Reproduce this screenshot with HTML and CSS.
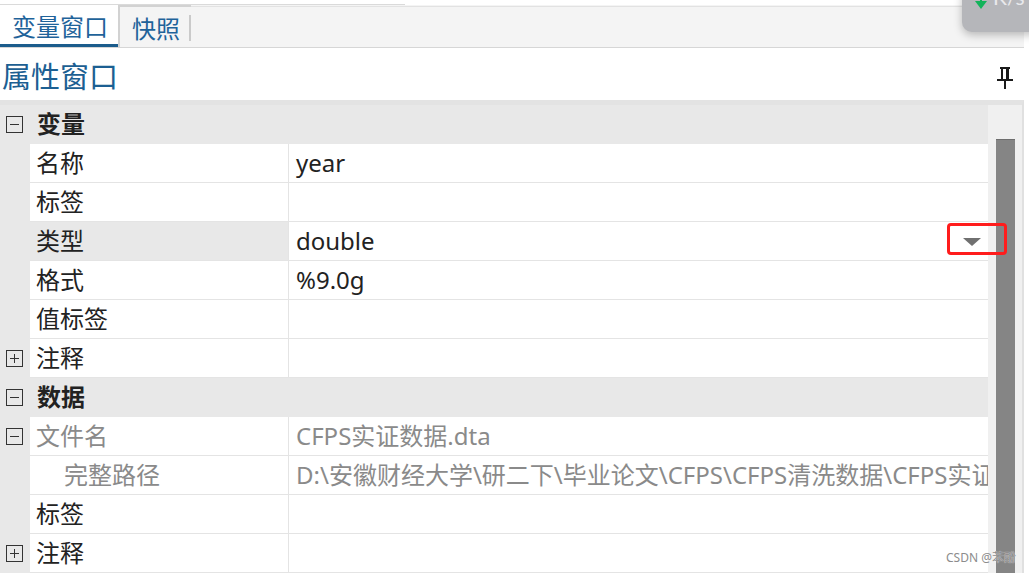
FILE: index.html
```html
<!DOCTYPE html>
<html lang="zh-CN">
<head>
  <meta charset="UTF-8" />
  <title>属性窗口</title>
  <link rel="stylesheet" href="styles.css">
</head>
<body>
  <div class="panel">
    <div class="edge"></div>
    <div class="tabs">
      <div class="tab active">变量窗口</div>
      <div class="tab">快照</div>
      <div class="tab-rest"></div>
    </div>

    <div class="title-bar">
      <h1>属性窗口</h1>
      <svg class="pin" width="16" height="22" viewBox="0 0 16 22">
        <rect x="3" y="0" width="10" height="2" />
        <rect x="4" y="0" width="2" height="13" />
        <rect x="9" y="0" width="3" height="13" />
        <rect x="0" y="12" width="16" height="2" />
        <rect x="7" y="14" width="2" height="8" />
      </svg>
    </div>

    <div class="grid">
      <div class="rows">
        <div class="row cat"><span class="gut"><i class="box"></i></span><span class="name">变量</span></div>
        <div class="row"><span class="gut"></span><span class="name">名称</span><span class="val">year</span></div>
        <div class="row"><span class="gut"></span><span class="name">标签</span><span class="val"></span></div>
        <div class="row sel"><span class="gut"></span><span class="name">类型</span><span class="val">double<i class="drop"></i></span></div>
        <div class="row"><span class="gut"></span><span class="name">格式</span><span class="val">%9.0g</span></div>
        <div class="row"><span class="gut"></span><span class="name">值标签</span><span class="val"></span></div>
        <div class="row"><span class="gut"><i class="box plus"></i></span><span class="name">注释</span><span class="val"></span></div>
        <div class="row cat"><span class="gut"><i class="box"></i></span><span class="name">数据</span></div>
        <div class="row dim"><span class="gut"><i class="box"></i></span><span class="name">文件名</span><span class="val">CFPS实证数据.dta</span></div>
        <div class="row dim"><span class="gut"></span><span class="name sub">完整路径</span><span class="val">D:\安徽财经大学\研二下\毕业论文\CFPS\CFPS清洗数据\CFPS实证数据.dta</span></div>
        <div class="row"><span class="gut"></span><span class="name">标签</span><span class="val"></span></div>
        <div class="row"><span class="gut"><i class="box plus"></i></span><span class="name">注释</span><span class="val"></span></div>
      </div>
      <div class="scroll"><div class="thumb"></div></div>
    </div>
  </div>

  <!-- overlays on top of the screenshot -->
  <div class="speed"><i class="down"></i><span>K/s</span></div>
  <div class="callout"></div>
  <div class="mark">CSDN @苯酚</div>
</body>
</html>
```

FILE: styles.css
```css
body {
  margin: 0;
  background: #fff;
  font-family: "Noto Sans", "Noto Sans CJK SC", sans-serif;
  color: #222;
  overflow: hidden;
}

.panel {
  width: 1024px;
}

.edge {
  width: 405px;
  height: 4px;
  border-bottom: 1px solid #dadada;
}

/* tabs */
.tabs {
  display: flex;
  height: 43px;
  box-sizing: border-box;
  background: #f4f4f4;
  border-bottom: 1px solid #d6d6d6;
}
.tab {
  display: flex;
  align-items: center;
  font-size: 24px;
  color: #1f639a;
  box-sizing: border-box;
  position: relative;
}
.tab.active {
  width: 118px;
  padding-left: 12px;
  background: #fff;
  border-bottom: 3px solid #1b5c8c;
  padding-top: 2px;
}
.tab:not(.active) {
  width: 73px;
  padding-left: 12px;
  border-top: 2px solid #d2d2d2;
  border-left: 2px solid #d2d2d2;
}
.tab:not(.active)::after {
  content: "";
  position: absolute;
  right: 0;
  top: 8px;
  bottom: 6px;
  width: 2px;
  background: #cacaca;
}
.tab-rest {
  flex: 1;
  margin-top: 1px;
  border-top: 1px solid #e2e2e2;
}

/* title */
.title-bar {
  height: 52px;
  display: flex;
  align-items: center;
  justify-content: space-between;
  padding: 5px 11px 0 2px;
  box-sizing: border-box;
}
.title-bar h1 {
  margin: 0;
  font-size: 29px;
  font-weight: normal;
  color: #1c5f92;
  line-height: 40px;
}
.pin {
  fill: #1a1a1a;
  margin-top: 3px;
}

/* property grid */
.grid {
  display: flex;
  border-top: 5px solid #e3e3e3;
  border-right: 2px solid #e0e0e0;
  height: 473px;
}
.rows {
  width: 988px;
}
.row {
  display: flex;
  height: 39px;
  font-size: 24px;
  line-height: 38px;
}
.gut {
  width: 30px;
  flex: none;
  background: #e8e8e8;
  display: flex;
  align-items: center;
  padding-left: 6px;
  box-sizing: border-box;
}
.name {
  width: 259px;
  flex: none;
  box-sizing: border-box;
  padding-left: 6px;
  border-bottom: 1px solid #e4e4e4;
  border-right: 1px solid #e4e4e4;
  white-space: nowrap;
}
.val {
  flex: 1;
  padding: 0 7px;
  border-bottom: 1px solid #e4e4e4;
  white-space: nowrap;
  overflow: hidden;
  display: flex;
  align-items: center;
  justify-content: space-between;
}
.name.sub {
  padding-left: 34px;
}
.row.cat {
  background: #e8e8e8;
}
.row.cat .name {
  flex: 1;
  border: none;
  font-weight: bold;
  padding-left: 7px;
}
.row.sel .name {
  background: #e8e8e8;
}
.row.dim .name,
.row.dim .val {
  color: #8a8a8a;
}

/* expand boxes */
.box {
  width: 17px;
  height: 17px;
  box-sizing: border-box;
  border: 1px solid #333;
  position: relative;
}
.box::before {
  content: "";
  position: absolute;
  left: 3px;
  right: 3px;
  top: 7px;
  height: 1px;
  background: #333;
}
.box.plus::after {
  content: "";
  position: absolute;
  top: 3px;
  bottom: 3px;
  left: 7px;
  width: 1px;
  background: #333;
}

.drop {
  width: 0;
  height: 0;
  border-left: 9px solid transparent;
  border-right: 9px solid transparent;
  border-top: 8px solid #707070;
  margin-top: 2px;
}

.scroll {
  width: 34px;
  background: #f0f0f0;
  padding: 34px 7px 0 8px;
  box-sizing: border-box;
}
.thumb {
  height: 100%;
  background: #858585;
  border-top: 1px solid #6e6e6e;
}

/* overlays */
.speed {
  position: absolute;
  left: 962px;
  top: -14px;
  width: 80px;
  height: 46px;
  background: #b5b6ba;
  border-radius: 10px;
  box-shadow: 0 3px 8px rgba(0, 0, 0, 0.25);
  overflow: hidden;
}
.speed .down {
  position: absolute;
  left: 13px;
  top: 15px;
  width: 0;
  height: 0;
  border-left: 6px solid transparent;
  border-right: 6px solid transparent;
  border-top: 8px solid #12b35a;
}
.speed .down::before {
  content: "";
  position: absolute;
  left: -1px;
  top: -12px;
  width: 2px;
  height: 5px;
  background: #12b35a;
}
.speed span {
  position: absolute;
  left: 31px;
  top: -2px;
  font-family: "Lato", sans-serif;
  font-size: 21px;
  color: #e9e9ec;
}

.callout {
  position: absolute;
  left: 947px;
  top: 223px;
  width: 60px;
  height: 32px;
  box-sizing: border-box;
  border: 3px solid #ff1c1c;
  border-radius: 4px;
}

.mark {
  position: absolute;
  left: 946px;
  top: 548px;
  font-size: 12px;
  color: #8c8c8c;
  text-shadow: 0 0 1px #fff;
}
```
